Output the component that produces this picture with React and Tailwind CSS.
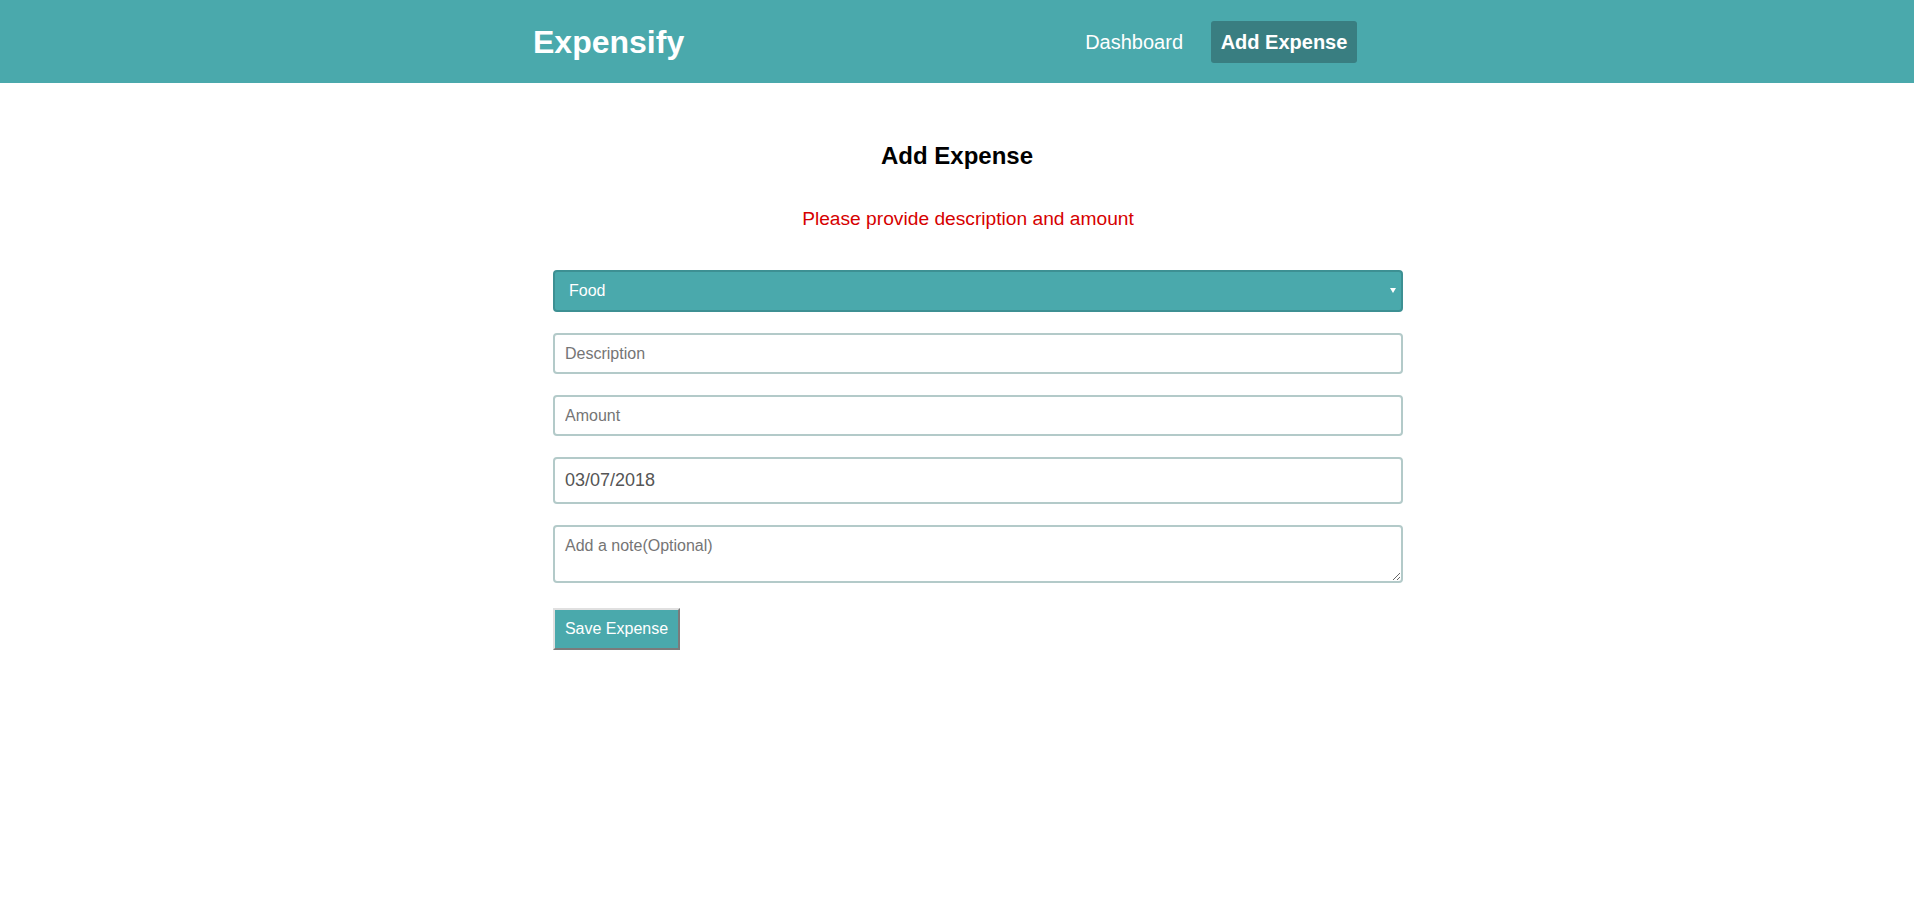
import React from 'react'

const font = { fontFamily: '"Liberation Sans", Arial, sans-serif' }

const Header = () => {
  return (
    <div className="h-[83px] bg-[#4aa9ac] flex items-center">
      <div className="ml-[533px] w-[824px] flex items-center justify-between">
        <div className="text-[32px] font-bold text-white leading-none">Expensify</div>
        <div className="flex items-center">
          <a className="text-[20px] text-white mr-[28px] cursor-pointer">Dashboard</a>
          <a className="h-[42px] w-[146px] flex items-center justify-center rounded-[3px] bg-[#397e81] text-[20px] font-bold text-white cursor-pointer">
            Add Expense
          </a>
        </div>
      </div>
    </div>
  )
}

const inputClass =
  'block w-full border-2 border-[#b3cac9] rounded-[4px] bg-white px-[10px] text-[16px] text-[#555] placeholder:text-[#757575] outline-none'

const ExpenseForm = () => {
  return (
    <div className="ml-[553px] w-[850px]">
      <div className="relative h-[42px]">
        <select
          defaultValue="food"
          className="appearance-none block w-full h-[42px] rounded-[4px] border-2 border-[#3d9093] bg-[#4aa9ac] pl-[14px] text-[16px] text-white outline-none"
        >
          <option value="food">Food</option>
          <option value="rent">Rent</option>
          <option value="travel">Travel</option>
        </select>
        <div className="pointer-events-none absolute right-[7px] top-[18px] h-0 w-0 border-l-[3px] border-r-[3px] border-t-[5px] border-l-transparent border-r-transparent border-t-white" />
      </div>
      <input type="text" placeholder="Description" className={inputClass + ' h-[41px] mt-[21px]'} />
      <input type="text" placeholder="Amount" className={inputClass + ' h-[41px] mt-[21px]'} />
      <input type="text" defaultValue="03/07/2018" className={inputClass + ' h-[47px] mt-[21px] text-[18px]'} />
      <textarea
        placeholder="Add a note(Optional)"
        className={inputClass + ' h-[58px] mt-[21px] pt-[7px]'}
      />
      <button className="mt-[25px] h-[42px] w-[127px] bg-[#4aa9ac] text-[16px] text-white border-2 border-t-[#e0e0e0] border-l-[#e0e0e0] border-r-[#7b7b7b] border-b-[#7b7b7b]">
        Save Expense
      </button>
    </div>
  )
}

const App = () => {
  return (
    <div className="min-h-[917px] bg-white" style={font}>
      <Header />
      <div className="pt-[59px]">
        <h1 className="text-center text-[24px] leading-[28px] font-bold text-black">Add Expense</h1>
        <div className="ml-[533px] w-[870px] mt-[38px] text-center text-[19.2px] leading-[22px] text-[#d60000]">
          Please provide description and amount
        </div>
        <div className="mt-[40px]">
          <ExpenseForm />
        </div>
      </div>
    </div>
  )
}

export default App
